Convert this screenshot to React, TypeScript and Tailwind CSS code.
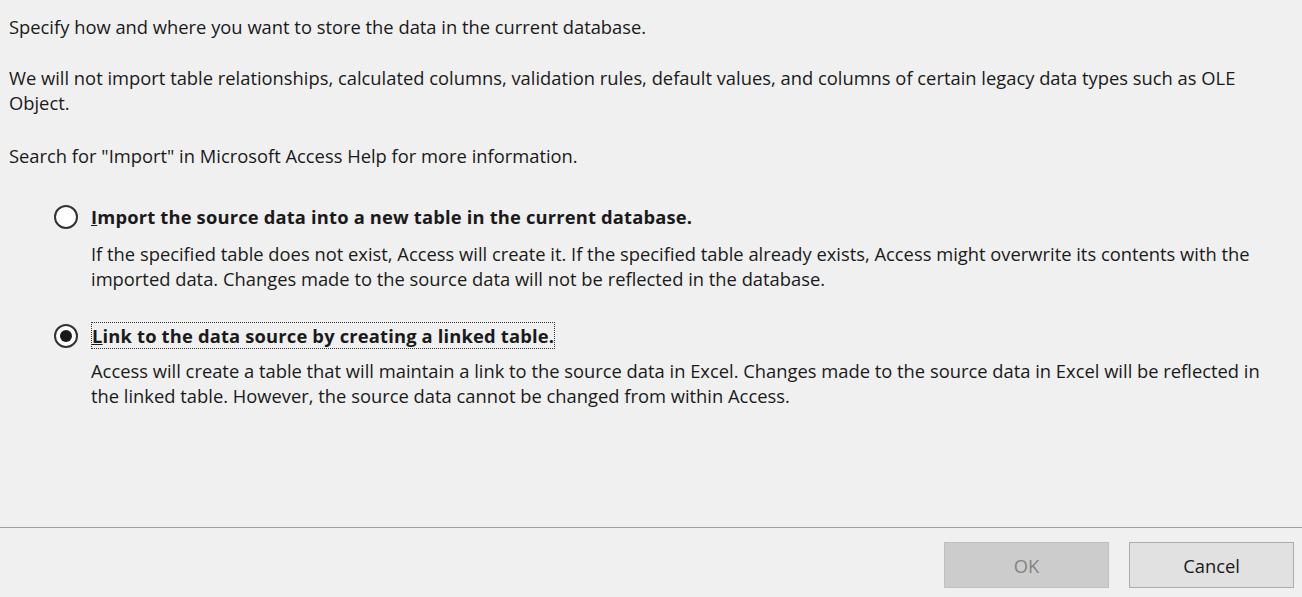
import React from "react";

function Radio({ checked }: { checked: boolean }) {
  return (
    <span className="flex h-[24px] w-[24px] shrink-0 items-center justify-center rounded-full border-2 border-[#333333] bg-white">
      {checked && <span className="h-[12px] w-[12px] rounded-full bg-[#1a1a1a]" />}
    </span>
  );
}

export default function App() {
  return (
    <div
      className="flex h-[597px] w-[1302px] flex-col bg-[#f0f0f0] text-[18.35px] leading-[25px] text-[#1a1a1a]"
      style={{ fontFamily: '"Open Sans", "Noto Sans", sans-serif' }}
    >
      <div className="flex flex-1 flex-col pl-[9px] pr-[20px] pt-[14px]">
        <p>Specify how and where you want to store the data in the current database.</p>
        <p className="mt-[26px]">
          We will not import table relationships, calculated columns, validation rules, default values, and columns of certain legacy data types such as OLE Object.
        </p>
        <p className="mt-[28px]">Search for "Import" in Microsoft Access Help for more information.</p>

        <div className="mt-[36px] flex flex-col pl-[45px]">
          <div className="flex items-center gap-[13px]">
            <Radio checked={false} />
            <span className="font-bold tracking-[0.17px]">
              <span className="underline">I</span>mport the source data into a new table in the current database.
            </span>
          </div>
          <p className="mt-[12px] pl-[37px]">
            If the specified table does not exist, Access will create it. If the specified table already exists, Access might overwrite its contents with the imported data. Changes made to the source data will not be reflected in the database.
          </p>

          <div className="mt-[31px] flex items-center gap-[13px]">
            <Radio checked={true} />
            <span className="border border-dotted border-[#333333] font-bold tracking-[0.17px]">
              <span className="underline">L</span>ink to the data source by creating a linked table.
            </span>
          </div>
          <p className="mt-[9px] pl-[37px]">
            Access will create a table that will maintain a link to the source data in Excel. Changes made to the source data in Excel will be reflected in the linked table. However, the source data cannot be changed from within Access.
          </p>
        </div>
      </div>

      <div className="h-[70px] border-t border-[#a0a0a0]">
        <div className="flex justify-end gap-[20px] pr-[8px] pt-[14px]">
          <button className="h-[46px] w-[165px] border border-[#bfbfbf] bg-[#cccccc] text-[#838383]">OK</button>
          <button className="h-[46px] w-[165px] border border-[#adadad] bg-[#e1e1e1] text-[#1a1a1a]">Cancel</button>
        </div>
      </div>
    </div>
  );
}
